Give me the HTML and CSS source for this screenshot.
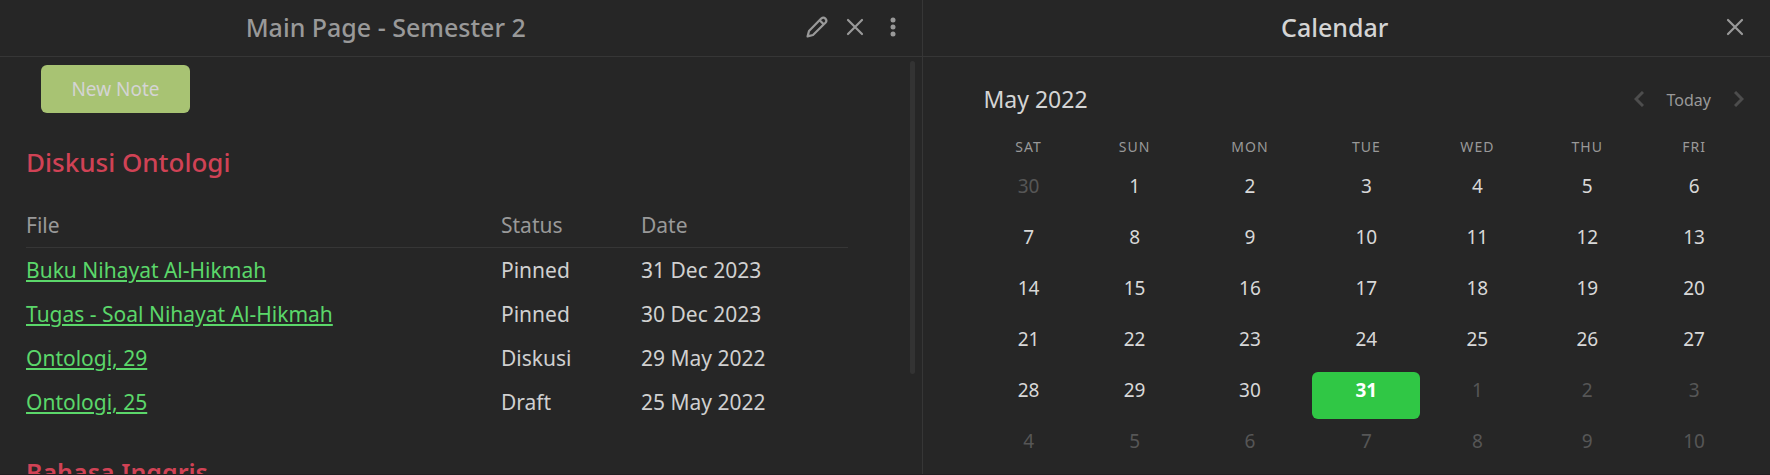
FILE: index.html
```html
<!DOCTYPE html>
<html lang="en">
<head>
  <meta charset="UTF-8" />
  <meta name="viewport" content="width=device-width, initial-scale=1.0"/>
  <title>Main Page - Semester 2</title>
  <link rel="stylesheet" href="styles.css">
</head>
<body>

  <main class="workspace">

    <section class="pane note-pane">
      <header class="pane-header">
        <h1 class="pane-title">Main Page - Semester 2</h1>
        <div class="pane-actions">
          <button type="button" class="icon-btn" aria-label="Edit">
            <svg width="22" height="22" viewBox="0 0 22 22" fill="none" stroke="currentColor" stroke-width="2.2" stroke-linejoin="round">
              <path d="M1.6 20.4 L3 15 L15.2 2.6 Q17.4 0.6 19.4 2.6 Q21.4 4.6 19.4 6.8 L7 19 Z" />
              <path d="M13.6 4.2 L17.8 8.4" />
            </svg>
          </button>
          <button type="button" class="icon-btn" aria-label="Close">
            <svg width="18" height="18" viewBox="0 0 18 18" fill="none" stroke="currentColor" stroke-width="2.2" stroke-linecap="round">
              <path d="M2 2 L16 16 M16 2 L2 16" />
            </svg>
          </button>
          <button type="button" class="icon-btn" aria-label="More options">
            <svg width="6" height="20" viewBox="0 0 6 20" fill="currentColor">
              <circle cx="3" cy="3" r="2.5" />
              <circle cx="3" cy="10" r="2.5" />
              <circle cx="3" cy="17" r="2.5" />
            </svg>
          </button>
        </div>
      </header>

      <div class="note-body">
        <button type="button" class="new-note">New Note</button>

        <h2>Diskusi Ontologi</h2>
        <table class="notes">
          <thead>
            <tr>
              <th class="col-file">File</th>
              <th class="col-status">Status</th>
              <th>Date</th>
            </tr>
          </thead>
          <tbody>
            <tr>
              <td><a href="#">Buku Nihayat Al-Hikmah</a></td>
              <td>Pinned</td>
              <td>31 Dec 2023</td>
            </tr>
            <tr>
              <td><a href="#">Tugas - Soal Nihayat Al-Hikmah</a></td>
              <td>Pinned</td>
              <td>30 Dec 2023</td>
            </tr>
            <tr>
              <td><a href="#">Ontologi, 29</a></td>
              <td>Diskusi</td>
              <td>29 May 2022</td>
            </tr>
            <tr>
              <td><a href="#">Ontologi, 25</a></td>
              <td>Draft</td>
              <td>25 May 2022</td>
            </tr>
          </tbody>
        </table>

        <h2 class="strong">Bahasa Inggris</h2>

        <div class="scroll-thumb"></div>
      </div>
    </section>

    <section class="pane calendar-pane">
      <header class="pane-header">
        <h1 class="pane-title">Calendar</h1>
        <div class="pane-actions">
          <button type="button" class="icon-btn" aria-label="Close">
            <svg width="18" height="18" viewBox="0 0 18 18" fill="none" stroke="currentColor" stroke-width="2.2" stroke-linecap="round">
              <path d="M2 2 L16 16 M16 2 L2 16" />
            </svg>
          </button>
        </div>
      </header>

      <div class="calendar-body">
        <div class="calendar-nav">
          <h2 class="month">May 2022</h2>
          <button type="button" class="arrow" aria-label="Previous month">
            <svg width="10" height="16" viewBox="0 0 10 16" fill="none" stroke="currentColor" stroke-width="3">
              <path d="M9 1 L2 8 L9 15" />
            </svg>
          </button>
          <button type="button" class="today-btn">Today</button>
          <button type="button" class="arrow" aria-label="Next month">
            <svg width="10" height="16" viewBox="0 0 10 16" fill="none" stroke="currentColor" stroke-width="3">
              <path d="M1 1 L8 8 L1 15" />
            </svg>
          </button>
        </div>

        <table class="calendar">
          <colgroup>
            <col class="sat"><col class="sun"><col class="mon"><col class="tue"><col class="wed"><col class="thu"><col class="fri">
          </colgroup>
          <thead>
            <tr><th>Sat</th><th>Sun</th><th>Mon</th><th>Tue</th><th>Wed</th><th>Thu</th><th>Fri</th></tr>
          </thead>
          <tbody>
            <tr>
              <td><div class="day other">30</div></td>
              <td><div class="day">1</div></td>
              <td><div class="day">2</div></td>
              <td><div class="day">3</div></td>
              <td><div class="day">4</div></td>
              <td><div class="day">5</div></td>
              <td><div class="day">6</div></td>
            </tr>
            <tr>
              <td><div class="day">7</div></td>
              <td><div class="day">8</div></td>
              <td><div class="day">9</div></td>
              <td><div class="day">10</div></td>
              <td><div class="day">11</div></td>
              <td><div class="day">12</div></td>
              <td><div class="day">13</div></td>
            </tr>
            <tr>
              <td><div class="day">14</div></td>
              <td><div class="day">15</div></td>
              <td><div class="day">16</div></td>
              <td><div class="day">17</div></td>
              <td><div class="day">18</div></td>
              <td><div class="day">19</div></td>
              <td><div class="day">20</div></td>
            </tr>
            <tr>
              <td><div class="day">21</div></td>
              <td><div class="day">22</div></td>
              <td><div class="day">23</div></td>
              <td><div class="day">24</div></td>
              <td><div class="day">25</div></td>
              <td><div class="day">26</div></td>
              <td><div class="day">27</div></td>
            </tr>
            <tr>
              <td><div class="day">28</div></td>
              <td><div class="day">29</div></td>
              <td><div class="day">30</div></td>
              <td><div class="day today">31</div></td>
              <td><div class="day other">1</div></td>
              <td><div class="day other">2</div></td>
              <td><div class="day other">3</div></td>
            </tr>
            <tr>
              <td><div class="day other">4</div></td>
              <td><div class="day other">5</div></td>
              <td><div class="day other">6</div></td>
              <td><div class="day other">7</div></td>
              <td><div class="day other">8</div></td>
              <td><div class="day other">9</div></td>
              <td><div class="day other">10</div></td>
            </tr>
          </tbody>
        </table>
      </div>
    </section>

  </main>

</body>
</html>
```
FILE: styles.css
```css
* {
  box-sizing: border-box;
}

body {
  margin: 0;
  background: #262626;
  color: #d0d0d0;
  font-family: 'Segoe UI', 'Noto Sans', 'Open Sans', sans-serif;
  font-size: 21px;
}

button {
  border: none;
  background: none;
  padding: 0;
  font-family: inherit;
  cursor: pointer;
}

.workspace {
  display: flex;
  height: 100vh;
  overflow: hidden;
  border-bottom: 1px solid #211e21;
}

.pane {
  display: flex;
  flex-direction: column;
  min-width: 0;
}

.note-pane {
  flex: 923;
  border-right: 1px solid #363636;
}

.calendar-pane {
  flex: 847;
}

/* pane header */
.pane-header {
  display: flex;
  align-items: center;
  flex-shrink: 0;
  height: 57px;
  padding-right: 10px;
  border-bottom: 1px solid #363636;
}

.pane-title {
  flex: 1;
  margin: 0;
  padding-right: 27px;
  padding-bottom: 2px;
  text-align: center;
  font-size: 25px;
  font-weight: 500;
  line-height: 36px;
  color: #999;
}

.calendar-pane .pane-header {
  padding-right: 16px;
  padding-left: 30px;
}

.calendar-pane .pane-title {
  padding-right: 0;
  color: #d4d4d4;
}

.pane-actions {
  display: flex;
}

.icon-btn {
  display: flex;
  align-items: center;
  justify-content: center;
  width: 38px;
  height: 38px;
  padding-bottom: 2px;
  color: #999;
}

/* note */
.note-body {
  position: relative;
  flex: 1;
  min-height: 0;
  overflow: hidden;
  padding: 8px 74px 0 26px;
}

.new-note {
  display: block;
  width: 149px;
  height: 48px;
  margin-left: 15px;
  border-radius: 6px;
  background: #a8c373;
  color: #d4d4d4;
  font-size: 19px;
}

.note-body h2 {
  margin: 30px 0 22px;
  font-size: 26px;
  font-weight: 500;
  line-height: 38px;
  color: #d04255;
}

.note-body h2.strong {
  font-size: 25px;
  font-weight: 600;
}

.notes {
  width: 100%;
  table-layout: fixed;
  border-collapse: collapse;
}

.notes th,
.notes td {
  height: 44px;
  padding: 2px 0 0;
  text-align: left;
  line-height: 32px;
}

.notes th {
  padding: 0;
  border-bottom: 1px solid #363636;
  font-weight: 400;
  color: #999;
}

.col-file {
  width: 475px;
}

.col-status {
  width: 140px;
}

.notes a {
  color: #5bd76a;
  text-decoration-thickness: 2px;
  text-underline-offset: 2px;
}

.scroll-thumb {
  position: absolute;
  top: 4px;
  right: 7px;
  width: 5px;
  height: 75%;
  border-radius: 3px;
  background: #333;
}

/* calendar */
.calendar-body {
  padding: 24px 24px 0 54px;
}

.calendar-nav {
  display: flex;
  align-items: center;
  height: 38px;
  padding-right: 2px;
}

.month {
  flex: 1;
  margin: 0;
  padding-left: 6px;
  padding-bottom: 2px;
  font-size: 23px;
  font-weight: 400;
  color: #d4d4d4;
}

.arrow {
  display: flex;
  padding-bottom: 2px;
  color: #4d4d4d;
}

.today-btn {
  padding: 0 23px 1px;
  font-size: 16px;
  color: #999;
}

.calendar {
  width: 100%;
  table-layout: fixed;
  border-collapse: collapse;
  margin-top: 12px;
}

.sat { width: 13.3%; }
.sun { width: 14.3%; }
.mon { width: 15.7%; }
.tue { width: 14.6%; }
.wed { width: 14.3%; }
.thu { width: 14.3%; }
.fri { width: 13.5%; }

.calendar th {
  height: 35px;
  padding: 0 0 3px;
  font-size: 14px;
  font-weight: 400;
  line-height: 26px;
  letter-spacing: 1px;
  text-transform: uppercase;
  color: #999;
}

.calendar td {
  padding: 2px;
}

.day {
  height: 47px;
  padding-top: 4px;
  border-radius: 6px;
  text-align: center;
  font-size: 19px;
  line-height: 28px;
  color: #d8d8d8;
}

.day.other {
  color: #565656;
}

.day.today {
  background: #30c745;
  color: #fff;
  font-weight: 700;
}
```
